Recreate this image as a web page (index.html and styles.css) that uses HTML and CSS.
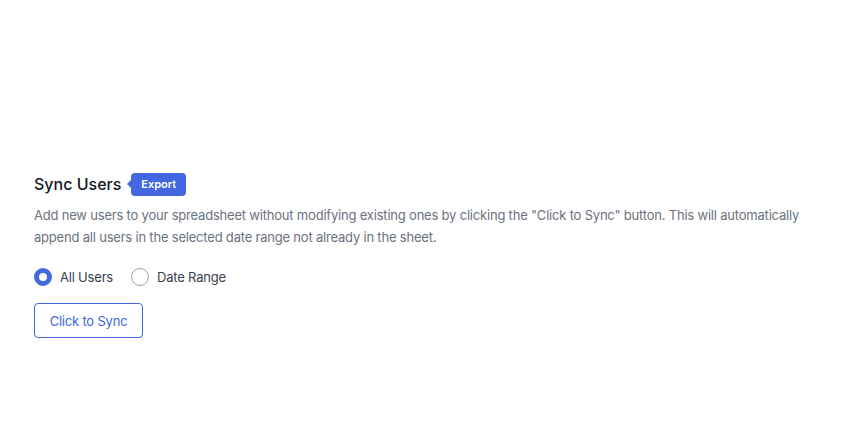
FILE: index.html
```html
<!DOCTYPE html>
<html>
<head>
<meta charset="utf-8">
<link rel="stylesheet" href="styles.css">
</head>
<body>
<main class="page">
  <section class="sync">
    <div class="header">
      <h2 class="title">Sync Users</h2>
      <span class="badge">Export</span>
    </div>
    <p class="desc">Add new users to your spreadsheet without modifying existing ones by clicking the "Click to Sync" button. This will automatically append all users in the selected date range not already in the sheet.</p>
    <div class="radios">
      <label class="radio"><span class="dot checked"></span>All Users</label>
      <label class="radio"><span class="dot"></span>Date Range</label>
    </div>
    <button class="btn">Click to Sync</button>
  </section>
</main>
</body>
</html>
```
FILE: styles.css
```css
* { box-sizing: border-box; }
html, body { margin: 0; padding: 0; background: #fff; }
body {
  font-family: Inter, "Noto Sans", sans-serif;
  width: 844px;
  height: 445px;
  overflow: hidden;
}
.page {
  padding: 171px 34px 0 34px;
}
.sync { width: 780px; }
.header {
  display: flex;
  align-items: center;
  gap: 10px;
  height: 26px;
}
.title {
  margin: 0;
  font-size: 16px;
  font-weight: 500;
  color: #111827;
}
.badge {
  position: relative;
  background: #4267df;
  color: #fff;
  font-size: 11px;
  font-weight: 600;
  border-radius: 4px;
  padding: 0 10px;
  height: 23px;
  line-height: 23px;
}
.badge::before {
  content: "";
  position: absolute;
  left: -4px;
  top: 50%;
  margin-top: -4px;
  border-top: 4px solid transparent;
  border-bottom: 4px solid transparent;
  border-right: 4px solid #4267df;
}
.desc {
  margin: 7px 0 0 0;
  font-size: 13px;
  letter-spacing: -0.2px;
  line-height: 22px;
  color: #6b7280;
}
.radios {
  display: flex;
  gap: 18px;
  margin-top: 20px;
}
.radio {
  display: flex;
  align-items: center;
  gap: 8px;
  font-size: 13px;
  letter-spacing: -0.2px;
  color: #374151;
}
.dot {
  width: 18px;
  height: 18px;
  border-radius: 50%;
  border: 1px solid #9ca3af;
  background: #fff;
}
.dot.checked {
  border: 5px solid #4267df;
}
.btn {
  margin-top: 17px;
  width: 109px;
  height: 35px;
  border: 1px solid #4267df;
  border-radius: 4px;
  background: #fff;
  color: #4267df;
  font-family: Inter, "Noto Sans", sans-serif;
  font-size: 13px;
  letter-spacing: -0.2px;
  padding: 0;
}
```
